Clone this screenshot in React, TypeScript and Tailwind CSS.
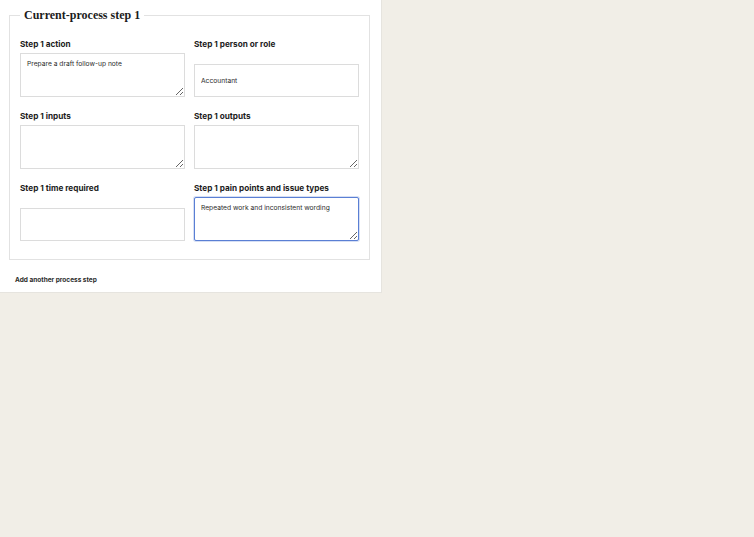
import { useRef, useEffect } from "react";

const sans = "font-['Inter','Liberation_Sans',sans-serif]";

function Label({ children }: { children: React.ReactNode }) {
  return (
    <label className={`block text-[8.2px] leading-[12px] font-bold text-[#1c1c1c] mb-[3px] ${sans}`}>
      {children}
    </label>
  );
}

function Area({ value, focused }: { value?: string; focused?: boolean }) {
  const ref = useRef<HTMLTextAreaElement>(null);
  useEffect(() => {
    if (focused && ref.current) {
      const el = ref.current;
      el.focus();
      el.setSelectionRange(el.value.length, el.value.length);
    }
  }, [focused]);
  return (
    <textarea
      ref={ref}
      defaultValue={value}
      className={
        "block w-full h-[44px] resize-y px-[6px] py-[5px] text-[6.7px] leading-[10px] text-[#2b2b2b] bg-white outline-none " +
        sans +
        (focused
          ? " border-[1.5px] border-[#5a7fd4] rounded-[2px] shadow-[0_0_0_1px_rgba(90,127,212,0.25)]"
          : " border border-[#dcdcdc]")
      }
    />
  );
}

function Input({ value }: { value?: string }) {
  return (
    <input
      defaultValue={value}
      className={`block w-full h-[33px] px-[6px] text-[6.7px] text-[#2b2b2b] bg-white border border-[#dcdcdc] outline-none ${sans}`}
    />
  );
}

function Field({
  label,
  children,
}: {
  label: string;
  children: React.ReactNode;
}) {
  return (
    <div className="flex flex-col justify-between">
      <Label>{label}</Label>
      {children}
    </div>
  );
}

export default function App() {
  return (
    <div className="min-h-[537px] w-full bg-[#f1eee7]">
      <div className="w-[382px] bg-white border-r border-b border-[#e6e4df] pt-[7px]">
        <fieldset className="ml-[9px] mr-[11px] border border-[#e2e2e2] px-[10px] pt-[15px] pb-[18px]">
          <legend className="px-[4px] text-[12px] leading-[16px] font-bold text-[#1c1c1c] font-['Liberation_Serif','DejaVu_Serif',serif]">
            Current-process step 1
          </legend>
          <div className="grid grid-cols-2 gap-x-[9px] gap-y-[13px]">
            <Field label="Step 1 action">
              <Area value="Prepare a draft follow-up note" />
            </Field>
            <Field label="Step 1 person or role">
              <Input value="Accountant" />
            </Field>
            <Field label="Step 1 inputs">
              <Area />
            </Field>
            <Field label="Step 1 outputs">
              <Area />
            </Field>
            <Field label="Step 1 time required">
              <Input />
            </Field>
            <Field label="Step 1 pain points and issue types">
              <Area value="Repeated work and inconsistent wording" focused />
            </Field>
          </div>
        </fieldset>
        <div className="h-[32px] pt-[16px] pl-[15px]">
          <button className={`block text-[6.5px] leading-[8px] font-bold text-[#2a2a2a] ${sans}`}>
            Add another process step
          </button>
        </div>
      </div>
    </div>
  );
}
